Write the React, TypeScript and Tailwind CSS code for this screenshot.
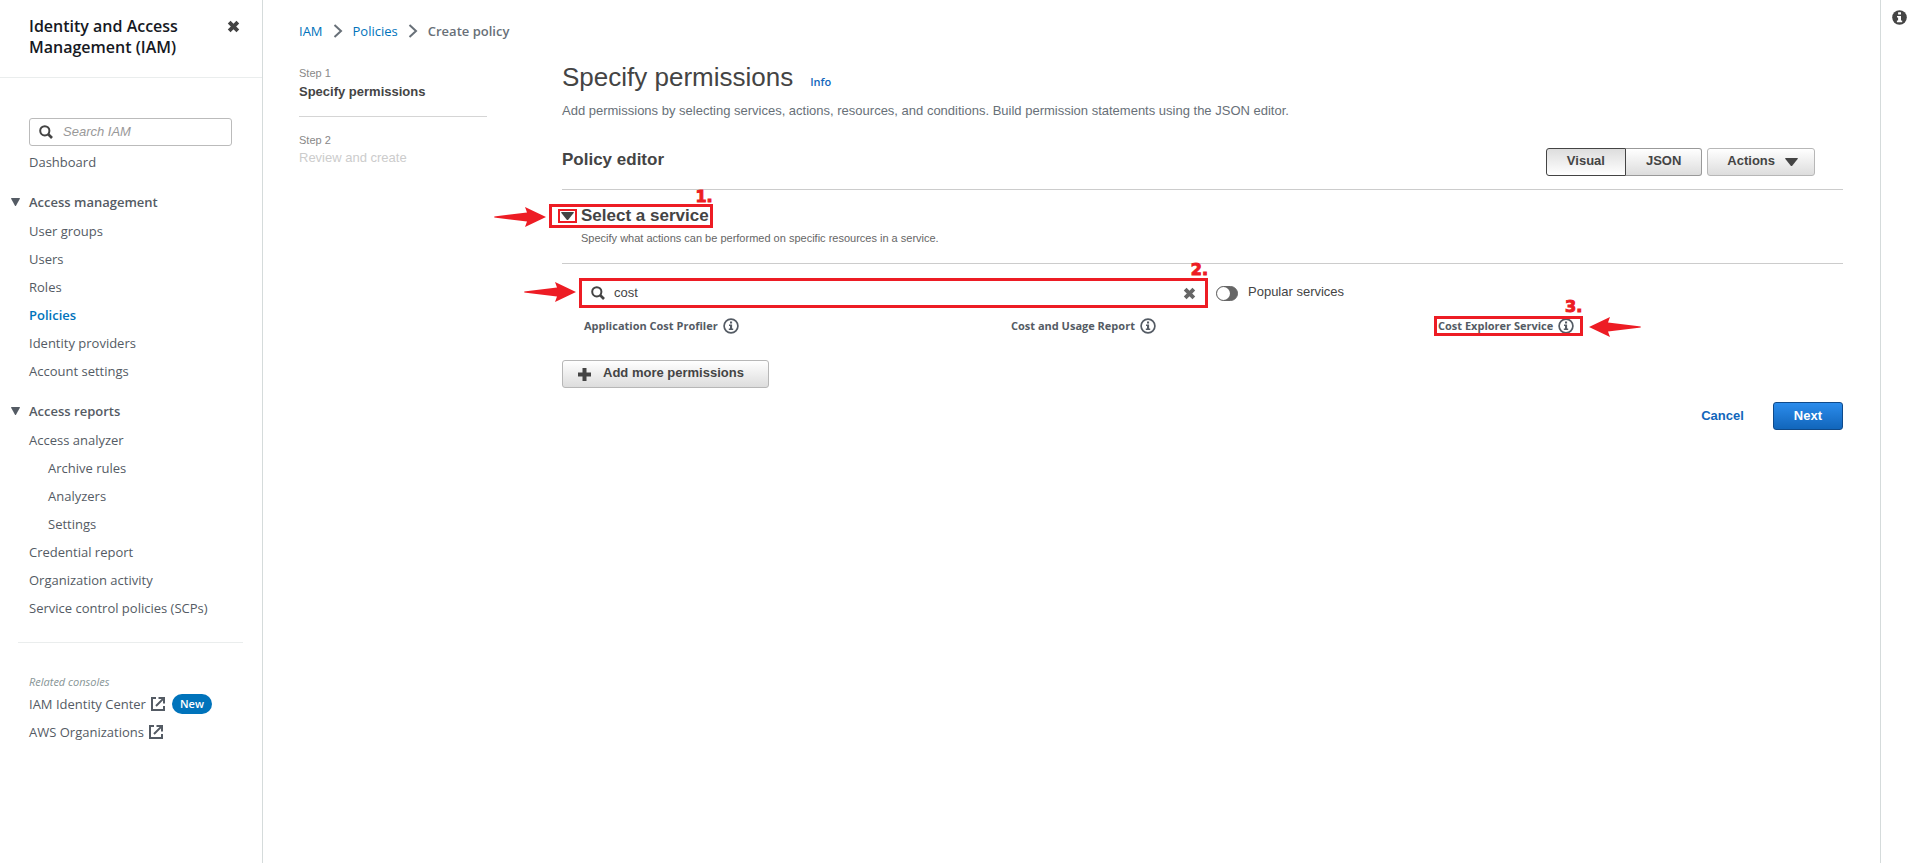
import { useState } from 'react';
import type { ReactNode } from 'react';

const ember = "font-['Open_Sans','Noto_Sans',sans-serif]";

type NavItem = { label: string; nested?: boolean; current?: boolean };

const accessManagement: NavItem[] = [
  { label: 'User groups' },
  { label: 'Users' },
  { label: 'Roles' },
  { label: 'Policies', current: true },
  { label: 'Identity providers' },
  { label: 'Account settings' },
];

const accessReports: NavItem[] = [
  { label: 'Access analyzer' },
  { label: 'Archive rules', nested: true },
  { label: 'Analyzers', nested: true },
  { label: 'Settings', nested: true },
  { label: 'Credential report' },
  { label: 'Organization activity' },
  { label: 'Service control policies (SCPs)' },
];

const services = ['Application Cost Profiler', 'Cost and Usage Report', 'Cost Explorer Service'];

function CloseIcon({ className }: { className: string }) {
  return (
    <svg viewBox="0 0 12 12" className={className} aria-hidden="true">
      <path d="M2 2L10 10M10 2L2 10" stroke="currentColor" strokeWidth="3.6" />
    </svg>
  );
}

function SearchIcon({ className }: { className: string }) {
  return (
    <svg viewBox="0 0 14 14" className={className} aria-hidden="true" fill="none" stroke="currentColor">
      <circle cx="5.8" cy="5.8" r="4.6" strokeWidth="2" />
      <path d="M9 9L13 13" strokeWidth="2.6" />
    </svg>
  );
}

function Caret({ className }: { className: string }) {
  return (
    <svg viewBox="0 0 14 8" preserveAspectRatio="none" className={className} aria-hidden="true">
      <path d="M0 0.6Q0 0 1 0H13Q14 0 14 0.6L8 7.4Q7 8.4 6 7.4Z" fill="currentColor" />
    </svg>
  );
}

function Chevron() {
  return (
    <svg viewBox="0 0 10 14" className="h-[14px] w-[10px]" fill="none" stroke="#687078" strokeWidth="2" aria-hidden="true">
      <path d="M1.5 1L8 7L1.5 13" />
    </svg>
  );
}

function ExternalIcon() {
  return (
    <svg viewBox="0 0 14 14" className="h-[14px] w-[14px]" fill="none" stroke="#545b64" strokeWidth="2" aria-hidden="true">
      <path d="M5 1H1V13H13V9" />
      <path d="M7.5 1H13V6.5M12.6 1.4L5 9" />
    </svg>
  );
}

function InfoCircle() {
  return (
    <svg viewBox="0 0 16 16" className="h-[16px] w-[16px] shrink-0" aria-hidden="true">
      <circle cx="8" cy="8" r="6.9" fill="none" stroke="#545b64" strokeWidth="1.7" />
      <path d="M7 3.6H9.1V5.4H7ZM6 6.6H9.1V10.6H10.2V12H5.8V10.6H7V7.9H6Z" fill="#545b64" />
    </svg>
  );
}

function Arrow({ className }: { className: string }) {
  return (
    <svg viewBox="0 0 52 20" className={`absolute h-[20px] w-[52px] ${className}`} aria-hidden="true">
      <path d="M0 10Q0 9.3 2 9.2L33 5.6L31 0L52 10L31 20L33 14.6L2 10.8Q0 10.7 0 10Z" fill="#ed1c24" />
    </svg>
  );
}

function Marker({ children, className }: { children: ReactNode; className: string }) {
  return (
    <span
      className={`absolute font-['DejaVu_Sans',sans-serif] text-[16px] leading-[16px] font-bold text-[#ed1c24] [-webkit-text-stroke:1px_#ed1c24] ${className}`}
    >
      {children}
    </span>
  );
}

function NavGroup({ title, items }: { title: string; items: NavItem[] }) {
  const [open, setOpen] = useState(true);
  return (
    <section>
      <button type="button" onClick={() => setOpen(!open)} className="flex h-[30px] items-center gap-[9px] pl-[11px] font-semibold">
        <Caret className="h-[8px] w-[9px]" />
        {title}
      </button>
      {open && (
        <ul>
          {items.map((item) => (
            <li key={item.label} className={`flex h-[28px] items-center ${item.nested ? 'pl-[48px]' : 'pl-[29px]'}`}>
              <a href="#" className={item.current ? 'font-semibold text-[#0073bb]' : ''}>
                {item.label}
              </a>
            </li>
          ))}
        </ul>
      )}
    </section>
  );
}

function Sidebar() {
  return (
    <aside className={`w-[263px] shrink-0 border-r border-[#d5dbdb] text-[13px] leading-[20px] text-[#545b64] ${ember}`}>
      <header className="flex h-[78px] items-start justify-between border-b border-[#eaeded] pt-[16px] pr-[22px] pl-[29px]">
        <h2 className="text-[16px] leading-[21px] font-semibold text-[#16191f]">
          Identity and Access
          <br />
          Management (IAM)
        </h2>
        <button type="button" aria-label="Close navigation" className="mt-[4px] text-[#444444]">
          <CloseIcon className="h-[13px] w-[13px]" />
        </button>
      </header>
      <nav className="pt-[40px]">
        <label className="mr-[30px] ml-[29px] flex h-[28px] items-center gap-[10px] rounded-[3px] border border-[#bbbbbb] pl-[9px]">
          <SearchIcon className="h-[14px] w-[14px] shrink-0 text-[#444444]" />
          <input
            type="search"
            aria-label="Search IAM"
            placeholder="Search IAM"
            className="w-full min-w-0 font-['Liberation_Sans',sans-serif] text-[13px] outline-none placeholder:text-[#999999] placeholder:italic"
          />
        </label>
        <a href="#" className="mb-[13px] flex h-[28px] items-center pt-[4px] pl-[29px]">
          Dashboard
        </a>
        <div className="flex flex-col gap-[11px]">
          <NavGroup title="Access management" items={accessManagement} />
          <NavGroup title="Access reports" items={accessReports} />
        </div>
        <hr className="mt-[20px] mr-[19px] ml-[18px] border-[#eaeded]" />
        <p className="mt-[31px] pl-[29px] text-[11px] leading-[16px] text-[#879596] italic">Related consoles</p>
        <a href="#" className="flex h-[28px] items-center gap-[5px] pl-[29px]">
          IAM Identity Center <ExternalIcon />
          <span className="ml-[2px] rounded-full bg-[#0073bb] px-[8px] text-[11px] leading-[20px] font-semibold text-white">New</span>
        </a>
        <a href="#" className="flex h-[28px] items-center gap-[5px] pl-[29px]">
          AWS Organizations <ExternalIcon />
        </a>
      </nav>
    </aside>
  );
}

function Steps() {
  return (
    <ol className="w-[188px] shrink-0 text-[13px] leading-[18px]">
      <li className="border-b border-[#d5d5d5] pb-[15px]">
        <p className="text-[11px] text-[#888888]">Step 1</p>
        <p className="pt-[1px] font-bold text-[#444444]">Specify permissions</p>
      </li>
      <li className="pt-[14px]">
        <p className="text-[11px] text-[#888888]">Step 2</p>
        <p className="text-[#cccccc]">Review and create</p>
      </li>
    </ol>
  );
}

function ServiceSearch() {
  const [query, setQuery] = useState('cost');
  const [popular, setPopular] = useState(false);
  return (
    <div className="flex items-center gap-[8px] pr-[6px] pl-[17px]">
      <div className="relative flex h-[30px] w-1/2 items-center gap-[9px] border-[3px] border-[#ed1c24] px-[9px]">
        <Arrow className="top-[1px] left-[-58px]" />
        <Marker className="top-[-19px] right-[-3px]">2.</Marker>
        <SearchIcon className="h-[14px] w-[14px] shrink-0 text-[#444444]" />
        <input
          aria-label="Filter services"
          value={query}
          onChange={(event) => setQuery(event.target.value)}
          className="w-full min-w-0 text-[13px] outline-none"
        />
        <button type="button" aria-label="Clear filter" onClick={() => setQuery('')} className="text-[#666666]">
          <CloseIcon className="h-[13px] w-[13px]" />
        </button>
      </div>
      <label className="flex items-center gap-[10px] text-[13px] leading-[18px]">
        <input
          type="checkbox"
          role="switch"
          checked={popular}
          onChange={(event) => setPopular(event.target.checked)}
          className="h-[15px] w-[22px] appearance-none rounded-full border border-[#666666] bg-[#666666] before:block before:h-[13px] before:w-[13px] before:rounded-full before:bg-white checked:bg-[#1166bb] checked:before:ml-[7px]"
        />
        <span className="pb-[2px]">Popular services</span>
      </label>
    </div>
  );
}

function PolicyEditor() {
  const [mode, setMode] = useState('Visual');
  return (
    <div className="min-w-0 flex-1">
      <h1 className="flex items-baseline gap-[17px] text-[26px] leading-[30px]">
        Specify permissions
        <a href="#" className={`text-[11px] leading-[16px] font-semibold text-[#1166bb] ${ember}`}>
          Info
        </a>
      </h1>
      <p className="mt-[10px] text-[13px] leading-[18px] text-[#687078]">
        Add permissions by selecting services, actions, resources, and conditions. Build permission statements using the JSON editor.
      </p>
      <div className="mt-[28px] flex items-start justify-between border-b border-[#cccccc] pr-[28px] pb-[13px] text-[13px] font-bold">
        <h2 className="text-[17px] leading-[24px]">Policy editor</h2>
        <div className="flex gap-[5px]">
          <div className="flex">
            {['Visual', 'JSON'].map((name) => (
              <button
                key={name}
                type="button"
                aria-pressed={mode === name}
                onClick={() => setMode(name)}
                className={`h-[28px] border px-[20px] pb-[3px] first:rounded-l-[3px] last:rounded-r-[3px] ${
                  mode === name
                    ? 'border-[#444444] bg-linear-to-b from-[#dddddd] to-white'
                    : 'border-[#999999] bg-linear-to-b from-white to-[#dddddd] last:border-l-0'
                }`}
              >
                {name}
              </button>
            ))}
          </div>
          <button
            type="button"
            className="flex h-[28px] items-center gap-[10px] rounded-[3px] border border-[#b7b7b7] bg-linear-to-b from-white to-[#dddddd] pr-[16px] pl-[19px] pb-[3px]"
          >
            Actions <Caret className="mt-[2px] h-[8px] w-[13px]" />
          </button>
        </div>
      </div>

      <section>
        <div className="border-b border-[#cccccc] pt-[14px] pb-[17px]">
          <button type="button" aria-expanded="true" className="relative flex h-[24px] items-center text-[17px] leading-[24px] font-bold">
            <Arrow className="top-[3px] left-[-68px]" />
            <span className="absolute inset-y-0 right-[-4px] left-[-13px] border-[3px] border-[#ed1c24]" />
            <Marker className="top-[-15px] right-[-4px]">1.</Marker>
            <span className="mr-[4px] ml-[-4px] flex h-[14px] w-[19px] items-center justify-center border-2 border-[#ed1c24]">
              <Caret className="h-[8px] w-[13px]" />
            </span>
            Select a service
          </button>
          <p className="pt-[2px] pl-[19px] text-[11px] leading-[16px] text-[#666666]">
            Specify what actions can be performed on specific resources in a service.
          </p>
        </div>
        <div className="pt-[14px]">
          <ServiceSearch />
          <ul className={`grid grid-cols-3 pt-[8px] text-[11px] leading-[20px] font-bold text-[#545b64] ${ember}`}>
            {services.map((name, index) => (
              <li key={name} className="flex pl-[22px]">
                <a href="#" className="relative flex items-center gap-[5px]">
                  {name} <InfoCircle />
                  {index === 2 && (
                    <>
                      <span className="absolute inset-y-0 right-[-9px] left-[-4px] border-[3px] border-[#ed1c24]" />
                      <Marker className="top-[-17px] right-[-8px]">3.</Marker>
                      <Arrow className="top-[1px] right-[-67px] rotate-180" />
                    </>
                  )}
                </a>
              </li>
            ))}
          </ul>
        </div>
      </section>

      <button
        type="button"
        className="mt-[24px] flex h-[28px] items-center gap-[12px] rounded-[3px] border border-[#b7b7b7] bg-linear-to-b from-white to-[#dddddd] pr-[24px] pl-[15px] text-[13px] font-bold"
      >
        <svg viewBox="0 0 13 13" className="h-[13px] w-[13px]" aria-hidden="true">
          <path d="M6.5 0V13M0 6.5H13" stroke="currentColor" strokeWidth="4" />
        </svg>
        <span className="pb-[3px]">Add more permissions</span>
      </button>

      <div className="mt-[14px] flex items-center justify-end gap-[29px] text-[13px] font-bold">
        <button type="button" className="text-[#1166bb]">
          Cancel
        </button>
        <button type="button" className="h-[28px] rounded-[3px] border border-[#0f4a8a] bg-linear-to-b from-[#2b8cec] to-[#1166bb] px-[20px] text-white">
          Next
        </button>
      </div>
    </div>
  );
}

export default function App() {
  return (
    <div className="flex min-h-screen bg-white font-['Liberation_Sans',Arial,sans-serif] text-[#444444]">
      <Sidebar />
      <main className="min-w-0 flex-1 pr-[37px] pl-[36px]">
        <nav aria-label="Breadcrumb" className={`flex h-[62px] items-center gap-[10px] text-[13px] leading-[20px] ${ember}`}>
          <a href="#" className="text-[#0073bb]">IAM</a>
          <Chevron />
          <a href="#" className="text-[#0073bb]">Policies</a>
          <Chevron />
          <span className="font-semibold text-[#687078]">Create policy</span>
        </nav>
        <div className="flex gap-[75px]">
          <div className="pt-[2px]">
            <Steps />
          </div>
          <PolicyEditor />
        </div>
      </main>
      <aside className="w-[38px] shrink-0 border-l border-[#d5dbdb]">
        <button type="button" aria-label="Open help panel" className="mt-[10px] ml-[11px] block">
          <svg viewBox="0 0 15 15" className="h-[15px] w-[15px]" aria-hidden="true">
            <circle cx="7.5" cy="7.5" r="7.3" fill="#444444" />
            <path d="M6.1 2.3H9V4.6H6.1ZM5 5.9H9V10.4H10.2V12.2H4.9V10.4H6.1V7.6H5Z" fill="white" />
          </svg>
        </button>
      </aside>
    </div>
  );
}
